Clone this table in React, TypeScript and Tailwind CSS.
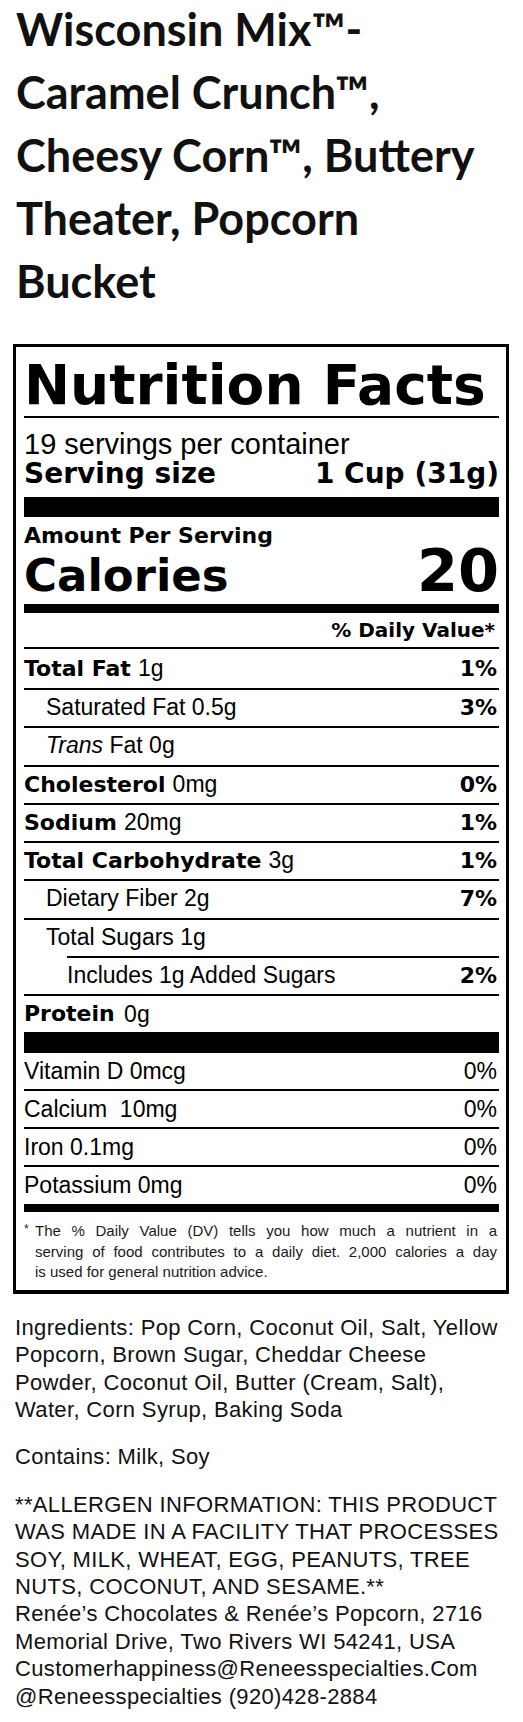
import React from "react";

// Label rows: bold nutrient name, amount, optional daily value
interface Nutrient {
  label: string;
  amount: string;
  dv?: string;
  bold?: boolean;
  italicPrefix?: string;
  indent?: 0 | 1 | 2;
}

const nutrients: Nutrient[] = [
  { label: "Total Fat", amount: "1g", dv: "1%", bold: true },
  { label: "Saturated Fat", amount: "0.5g", dv: "3%", indent: 1 },
  { label: "Fat", amount: "0g", italicPrefix: "Trans", indent: 1 },
  { label: "Cholesterol", amount: "0mg", dv: "0%", bold: true },
  { label: "Sodium", amount: "20mg", dv: "1%", bold: true },
  { label: "Total Carbohydrate", amount: "3g", dv: "1%", bold: true },
  { label: "Dietary Fiber", amount: "2g", dv: "7%", indent: 1 },
  { label: "Total Sugars", amount: "1g", indent: 1 },
  { label: "Includes 1g Added Sugars", amount: "", dv: "2%", indent: 2 },
];

const vitamins = [
  { label: "Vitamin D 0mcg", dv: "0%" },
  { label: "Calcium\u00a0 10mg", dv: "0%" },
  { label: "Iron 0.1mg", dv: "0%" },
  { label: "Potassium 0mg", dv: "0%" },
];

const heavy = "font-['DejaVu_Sans',sans-serif] font-bold";
const plain = "font-['Liberation_Sans',Arial,sans-serif]";

const NutrientRow: React.FC<{ n: Nutrient; first?: boolean }> = ({ n, first }) => {
  const indentCls =
    n.indent === 2 ? "ml-[43px]" : n.indent === 1 ? "pl-[22px]" : "";
  return (
    <div
      className={`flex items-center justify-between border-black ${
        first ? "h-[39px]" : "h-[38.25px] border-t-2"
      } ${indentCls}`}
    >
      <div className="leading-[26px] whitespace-nowrap">
        {n.bold ? (
          <>
            <span className={`${heavy} text-[22px]`}>{n.label}</span>{" "}
            <span className={`${plain} text-[23px] ml-[3px]`}>{n.amount}</span>
          </>
        ) : (
          <span className={`${plain} text-[23px]`}>
            {n.italicPrefix && <i>{n.italicPrefix} </i>}
            {n.label}
            {n.amount && ` ${n.amount}`}
          </span>
        )}
      </div>
      {n.dv && (
        <span className={`${heavy} text-[22px] leading-[26px] pr-[2px]`}>
          {n.dv}
        </span>
      )}
    </div>
  );
};

const App: React.FC = () => {
  return (
    <div className="w-[523px] min-h-[1722px] bg-white text-black overflow-hidden">
      {/* Product title */}
      <h1 className="font-['Lato',sans-serif] font-bold text-[45px] leading-[63px] pl-[16px] -mt-[2px] text-[#111]">
        <span className="block whitespace-nowrap">Wisconsin Mix™-</span>
        <span className="block whitespace-nowrap">Caramel Crunch™,</span>
        <span className="block whitespace-nowrap">Cheesy Corn™, Buttery</span>
        <span className="block whitespace-nowrap">Theater, Popcorn</span>
        <span className="block whitespace-nowrap">Bucket</span>
      </h1>

      {/* Nutrition Facts panel */}
      <div className="mt-[31px] ml-[13px] w-[496px] border-[3px] border-b-4 border-black pl-[8px] pr-[7px] pt-[9px] pb-[7px]">
        <div className={`${heavy} text-[55px] leading-[58px] whitespace-nowrap`}>
          Nutrition Facts
        </div>
        <div className="mt-[2px] h-[2px] bg-black" />

        <div className={`${plain} text-[29px] leading-[30px] mt-[11px]`}>
          19 servings per container
        </div>
        <div className={`${heavy} text-[28px] leading-[30px] flex justify-between`}>
          <span>Serving size</span>
          <span>1 Cup (31g)</span>
        </div>
        <div className="mt-[8px] h-[20px] bg-black" />

        <div className={`${heavy} text-[22px] leading-[24px] mt-[7px]`}>
          Amount Per Serving
        </div>
        <div className={`${heavy} flex justify-between items-baseline mt-[1px]`}>
          <span className="text-[45px] leading-[44px]">Calories</span>
          <span className="text-[59px] leading-[44px]">20</span>
        </div>
        <div className="mt-[6px] h-[9px] bg-black" />

        <div className={`${heavy} text-[20px] leading-[22px] mt-[6px] text-right pr-[4px]`}>
          % Daily Value*
        </div>
        <div className="mt-[6px] h-[2px] bg-black" />

        {nutrients.map((n, i) => (
          <NutrientRow key={n.label} n={n} first={i === 0} />
        ))}
        <div className="flex items-center h-[38.25px] border-t-2 border-black leading-[26px]">
          <span className={`${heavy} text-[22px]`}>Protein</span>
          <span className={`${plain} text-[23px] ml-[3px]`}>&nbsp;0g</span>
        </div>
        <div className="h-[21px] bg-black" />

        {vitamins.map((v, i) => (
          <div
            key={v.label}
            className={`flex items-center justify-between ${plain} text-[23px] leading-[26px] border-black ${
              i === 0 ? "h-[36px]" : "h-[38px] border-t-2"
            }`}
          >
            <span>{v.label}</span>
            <span className="pr-[2px]">{v.dv}</span>
          </div>
        ))}
        <div className="mt-[1px] h-[8px] bg-black" />

        {/* Footnote */}
        <div className={`${plain} text-[15px] leading-[20.5px] mt-[9px] flex text-[#1a1a1a]`}>
          <span className="w-[11px] shrink-0 text-[12px] leading-[17px]">*</span>
          <div className="flex-1 pr-[2px]">
            <div className="text-justify [text-align-last:justify]">
              The % Daily Value (DV) tells you how much a nutrient in a
            </div>
            <div className="text-justify [text-align-last:justify]">
              serving of food contributes to a daily diet. 2,000 calories a day
            </div>
            <div>is used for general nutrition advice.</div>
          </div>
        </div>
      </div>

      {/* Ingredients and allergen notes */}
      <div className={`${plain} text-[22px] tracking-[0.35px] leading-[27.4px] pl-[15px] mt-[20px] text-[#111]`}>
        <div className="whitespace-nowrap">
          <div>Ingredients: Pop Corn, Coconut Oil, Salt, Yellow</div>
          <div>Popcorn, Brown Sugar, Cheddar Cheese</div>
          <div>Powder, Coconut Oil, Butter (Cream, Salt),</div>
          <div>Water, Corn Syrup, Baking Soda</div>
        </div>
        <div className="mt-[20px]">Contains: Milk, Soy</div>
        <div className="mt-[20px] whitespace-nowrap">
          <div>**ALLERGEN INFORMATION: THIS PRODUCT</div>
          <div>WAS MADE IN A FACILITY THAT PROCESSES</div>
          <div>SOY, MILK, WHEAT, EGG, PEANUTS, TREE</div>
          <div>NUTS, COCONUT, AND SESAME.**</div>
          <div>Renée’s Chocolates &amp; Renée’s Popcorn, 2716</div>
          <div>Memorial Drive, Two Rivers WI 54241, USA</div>
          <div>Customerhappiness@Reneesspecialties.Com</div>
          <div>@Reneesspecialties (920)428-2884</div>
        </div>
      </div>
    </div>
  );
};

export default App;
